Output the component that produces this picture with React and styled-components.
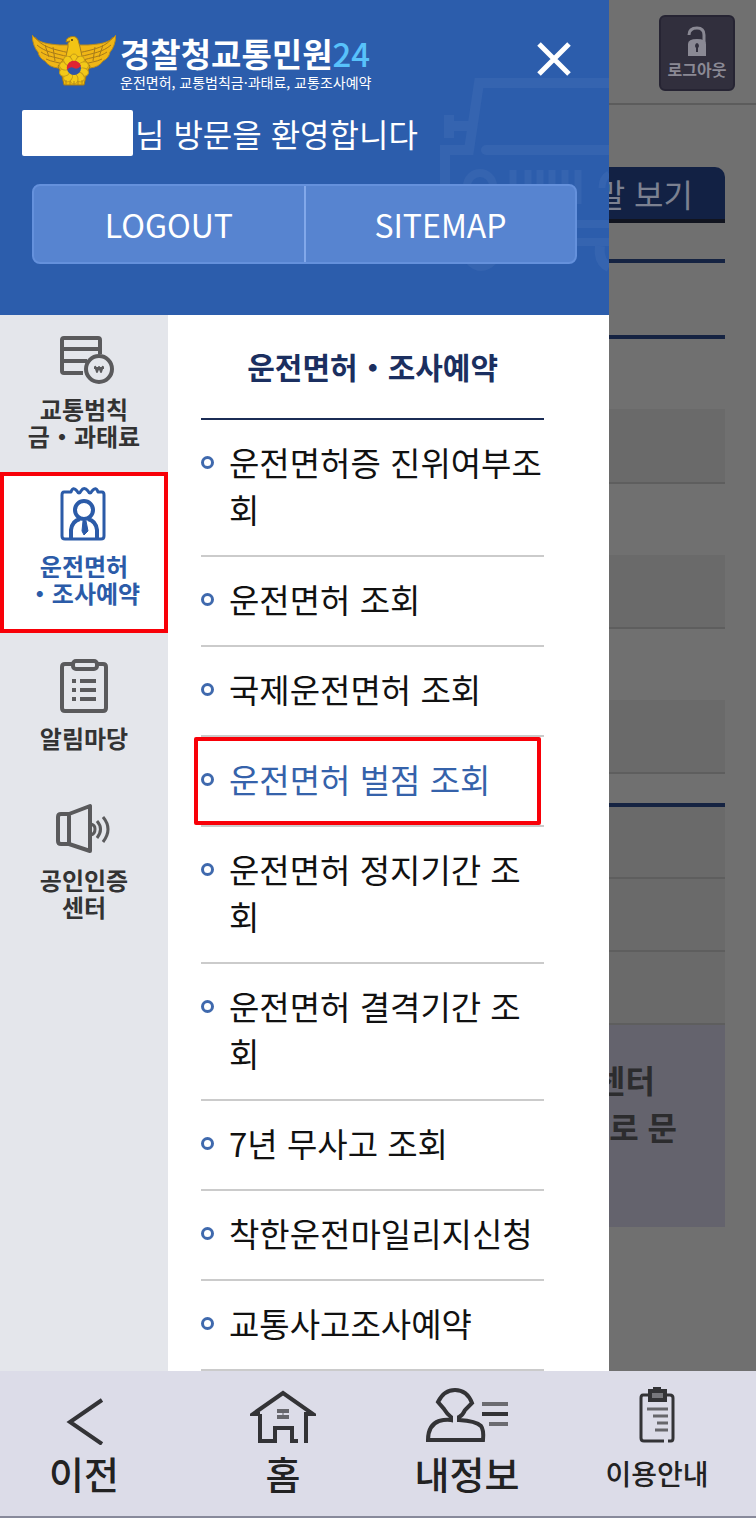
import React from "react";
import styled, { createGlobalStyle, css } from "styled-components";

const Global = createGlobalStyle`
  *, *::before, *::after { box-sizing: border-box; }
  body {
    margin: 0;
    background: #707070;
    font-family: "Noto Sans CJK KR", "Noto Sans", sans-serif;
    color: #111;
  }
  button { font: inherit; color: inherit; border: 0; background: none; padding: 0; cursor: pointer; }
  a { color: inherit; text-decoration: none; }
  ul { list-style: none; margin: 0; padding: 0; }
  h1, h2, p { margin: 0; }
  svg { display: block; }
`;

const Screen = styled.div`
  min-height: 100vh;
  display: flex;
  flex-direction: column;
`;

const Stage = styled.div`
  flex: 1;
  display: grid;
  grid-template-columns: minmax(0, 1fr);
  > * { grid-area: 1 / 1; }
`;

/* Dimmed page behind the drawer */

const Page = styled.div`
  background: #707070;
`;

const PageHeader = styled.header`
  display: flex;
  justify-content: flex-end;
  padding: 15px 21px 12px;
  border-bottom: 2px solid #5c5c5c;
`;

const LockButton = styled.button`
  width: 76px;
  height: 76px;
  display: flex;
  flex-direction: column;
  align-items: center;
  justify-content: center;
  background: #312f3d;
  border: 2px solid #262433;
  border-radius: 6px;
  color: #8a8994;
  font-size: 16px;
  font-weight: 700;
  line-height: 24px;
`;

const PageBody = styled.main`
  padding: 62px 31px 0;
`;

const PageTab = styled.div`
  width: 50%;
  margin-left: auto;
  padding-right: 32px;
  background: #122144;
  border-bottom: 4px solid #11141f;
  border-radius: 0 10px 0 0;
  color: #7c8191;
  font-size: 32px;
  line-height: 52px;
  text-align: right;
`;

const Rule = styled.div`
  height: 4px;
  margin-top: ${(p) => p.$gap}px;
  background: #152342;
`;

const Band = styled.div`
  height: ${(p) => p.$height}px;
  margin-top: ${(p) => p.$gap || 0}px;
  background: #6a6a6a;
  border-bottom: 2px solid #5e5e5e;
`;

const Notice = styled.div`
  padding: 31px 48px 77px;
  background: #64636d;
  color: #2c2c2e;
  font-size: 32px;
  font-weight: 700;
  line-height: 47px;
  text-align: right;
  p:first-child { padding-right: 22px; }
`;

/* Drawer */

const Drawer = styled.aside`
  width: 80.6%;
  z-index: 1;
  display: flex;
  flex-direction: column;
  background: #fff;
`;

const DrawerHeader = styled.header`
  position: relative;
  height: 315px;
  padding: 32px 32px 0;
  overflow: hidden;
  background: #2c5dac;
  color: #fff;
`;

const CarArt = styled.svg`
  position: absolute;
  top: 70px;
  right: 0;
`;

const BrandRow = styled.div`
  position: relative;
  display: flex;
  justify-content: space-between;
  align-items: flex-start;
`;

const Brand = styled.a`
  display: flex;
  gap: 4px;
`;

const BrandName = styled.h1`
  font-size: 33px;
  font-weight: 700;
  line-height: 42px;
  white-space: nowrap;
  span { color: #58c2fb; font-weight: 500; }
`;

const BrandNote = styled.p`
  font-size: 14px;
  line-height: 16px;
  white-space: nowrap;
`;

const CloseButton = styled.button`
  width: 46px;
  height: 54px;
  display: grid;
  place-items: center;
`;

const Welcome = styled.p`
  position: relative;
  display: flex;
  align-items: center;
  gap: 2px;
  margin: 20px 0 28px -10px;
  font-size: 32px;
  line-height: 42px;
  white-space: nowrap;
`;

const HiddenName = styled.span`
  width: 111px;
  height: 46px;
  border-radius: 2px;
  background: #fff;
`;

const Actions = styled.div`
  position: relative;
  display: flex;
  height: 80px;
  border: 2px solid #6591dc;
  border-radius: 8px;
  background: #5784d0;
`;

const ActionButton = styled.button`
  flex: 1;
  font-size: 32px;
  line-height: 76px;
  & + & { border-left: 2px solid #82a8ea; }
`;

const DrawerBody = styled.div`
  flex: 1;
  display: flex;
`;

const Sidebar = styled.nav`
  width: 168px;
  flex: none;
  background: #e4e6eb;
`;

const SideItem = styled.a`
  display: flex;
  flex-direction: column;
  align-items: center;
  gap: 11px;
  padding: ${(p) => (p.$compact ? "15px 0 23px" : "26px 0 24px")};
  color: #333;
  font-size: 24px;
  font-weight: 700;
  line-height: 27px;
  text-align: center;
  white-space: pre;
  ${(p) => p.$active && css`
    padding: 11px 0 23px;
    border: 4px solid #f80008;
    background: #fff;
    color: #2b5ba8;
  `}
`;

const Panel = styled.section`
  flex: 1;
  min-width: 0;
  padding: 0 65px 0 33px;
`;

const PanelTitle = styled.h2`
  padding: 28px 0 29px;
  border-bottom: 2px solid #1b2c55;
  color: #1b2f60;
  font-size: 30px;
  font-weight: 700;
  line-height: 46px;
  text-align: center;
  white-space: nowrap;
`;

const MenuRow = styled.li`
  position: relative;
  border-bottom: 2px solid #cbcbcb;
  ${(p) => p.$active && css`
    color: #3562aa;
    &::after {
      content: "";
      position: absolute;
      inset: 0 3px 0 -7px;
      border: 4px solid #f80008;
      border-radius: 2px;
      pointer-events: none;
    }
  `}
`;

const MenuLink = styled.a`
  display: flex;
  align-items: flex-start;
  gap: 15px;
  padding: 19px 0 22px;
  font-size: 33px;
  line-height: 47px;
  &::before {
    content: "";
    flex: none;
    width: 13px;
    height: 13px;
    margin-top: 17px;
    border: 3px solid #3f69ad;
    border-radius: 50%;
  }
`;

/* Bottom bar */

const BottomBar = styled.nav`
  display: flex;
  justify-content: space-between;
  padding: 16px 44px 23px 29px;
  background: #dcdce8;
  border-bottom: 2px solid #888a9b;
`;

const BarGroup = styled.div`
  display: flex;
  gap: ${(p) => p.$gap}px;
`;

const BarItem = styled.a`
  width: 110px;
  display: flex;
  flex-direction: column;
  align-items: center;
  gap: 8px;
  color: #222;
  font-size: ${(p) => (p.$small ? 28 : 38)}px;
  font-weight: 500;
  line-height: 40px;
  white-space: nowrap;
`;

/* Drawings */

const feathers = [
  "M3 5 C10 15 20 17 38 21",
  "M5 13 C13 20 22 21 37 25",
  "M9 20 C16 25 24 25 36 29",
  "M14 27 C20 30 26 30 34 33",
  "M13 13 L17 25",
  "M21 15 L23 29",
];

const Emblem = () => (
  <svg width="84" height="56" viewBox="0 0 84 56" role="img" aria-label="경찰청">
    {[false, true].map((flip) => (
      <g key={String(flip)} transform={flip ? "translate(84 0) scale(-1 1)" : undefined}>
        <path d="M0 3 C7 12 18 12 28 13 H42 V36 H26 Q17 35 13 29 Q7 26 6 20 Q1 15 0 3Z" fill="#f0b616" stroke="#b78a1c" />
        {feathers.map((d) => <path key={d} d={d} fill="none" stroke="#a67a1a" strokeWidth="1" />)}
      </g>
    ))}
    <path d="M36 15 Q35 11 38 9 L34 10 Q34 6 38 5 Q44 3 46 8 L48 15 L51 29 H33Z" fill="#f3c414" stroke="#a67d1c" />
    <circle cx="40" cy="8" r="1" fill="#463718" />
    <path d="M26 34 L32 27 L42 23 L52 27 L58 34 L54 44 L52 53 H32 L30 44Z" fill="#efbb0b" stroke="#a47b16" />
    {[0, 1, 2, 3, 4, 5, 6, 7, 8, 9].map((n) => (
      <ellipse key={n} cx="42" cy="27" rx="4" ry="5" fill="#f3c918" stroke="#c39a1a" strokeWidth="1" transform={`rotate(${n * 36} 42 37)`} />
    ))}
    <path d="M34 48 V53 M38 49 V53 M42 49 V53 M46 49 V53 M50 48 V53" stroke="#b48a1a" fill="none" />
    <circle cx="42" cy="36" r="7" fill="#2f55a8" />
    <path d="M35 38 A7 7 0 1 1 49 34 Q45 38 42 36 Q38 34 35 38Z" fill="#df2433" />
  </svg>
);

const Car = () => (
  <CarArt width="171" height="206" viewBox="438 70 171 206" fill="none" stroke="#3564b0" strokeWidth="10" aria-hidden="true">
    <path d="M609 83 H479 L469 150 H445 V200" />
    <path d="M486 150 H609" strokeLinecap="round" />
    <path d="M449 115 V138 M454 126 H472" />
    <circle cx="480" cy="186" r="13" strokeWidth="8" />
    <path d="M513 170 V204 M528 170 V204 M540 170 V204 M552 170 V204 M565 170 V204 M578 170 V204" strokeWidth="7" />
    <path d="M609 174 Q602 178 602 188" strokeWidth="7" />
    <path d="M570 224 H609 M570 242 H609" strokeWidth="8" />
    <path d="M470 260 Q481 272 493 260 M600 246 Q598 262 609 267" />
  </CarArt>
);

const Cross = () => (
  <svg width="34" height="34" viewBox="0 0 34 34" stroke="#fff" strokeWidth="5" aria-hidden="true">
    <path d="M2 2 L32 32 M32 2 L2 32" />
  </svg>
);

const OpenLock = () => (
  <svg width="20" height="31" viewBox="0 0 20 31" aria-hidden="true">
    <path d="M2 9 Q2 2 10 2 Q17 2 17 9 V17" fill="none" stroke="#8a8994" strokeWidth="3" />
    <path d="M1 30 V18 Q1 13 10 13 Q19 13 19 18 V30Z" fill="#8a8994" />
    <path d="M10 17 a3 3 0 0 1 1 5 V26 H9 V22 a3 3 0 0 1 1 -5Z" fill="#312f3d" />
  </svg>
);

const SideIcon = ({ children }) => (
  <svg width="60" height="54" viewBox="0 0 60 54" fill="none" stroke="#5a5a5c" strokeWidth="4" strokeLinejoin="round" aria-hidden="true">
    {children}
  </svg>
);

const FineIcon = () => (
  <SideIcon>
    <path d="M29 43 H10 Q8 43 8 41 V10 Q8 8 10 8 H44 Q46 8 46 10 V24 M8 19 H46 M8 31 H33" />
    <circle cx="45" cy="39" r="13" />
    <path d="M41 36 L43 42 L45 37 L47 42 L49 36 M40 38 H50" strokeWidth="2" />
  </SideIcon>
);

const LicenceIcon = () => (
  <svg width="60" height="54" viewBox="0 0 60 54" fill="none" stroke="#2b5ba8" strokeWidth="4" strokeLinejoin="round" aria-hidden="true">
    <path d="M16 5 H10 Q8 5 8 8 V49 Q8 52 11 52 H47 Q50 52 50 49 V8 Q50 5 48 5 H44 Q42 -1 38 4 Q36 8 34 4 Q30 -1 27 4 Q25 8 23 4 Q19 -1 17 5Z" strokeWidth="3" />
    <circle cx="30" cy="23" r="9" />
    <path d="M17 52 V43 Q18 34 26 32 M43 52 V43 Q42 34 34 32" />
    <path d="M29 34 H32 L34 44 L30 48 L28 44Z" fill="#2b5ba8" strokeWidth="1" />
  </svg>
);

const ListIcon = () => (
  <SideIcon>
    <path d="M18 5 H11 Q8 5 8 8 V49 Q8 52 11 52 H49 Q52 52 52 49 V8 Q52 5 49 5 H43" />
    <rect x="19" y="2" width="24" height="8" rx="3" />
    <path d="M18 22 H22 M26 22 H42 M18 31 H22 M26 31 H42 M18 40 H22 M26 40 H42" />
  </SideIcon>
);

const SpeakerIcon = () => (
  <SideIcon>
    <path d="M36 5 V50 L15 43 H7 Q4 43 4 40 V16 Q4 13 7 13 H15 L36 5Z M15 13 V42" />
    <path d="M37 23 Q41 24 41 28 Q41 33 37 34 M43 20 Q50 28 43 37 M49 16 Q59 28 49 41" strokeWidth="3" />
  </SideIcon>
);

const BarIcon = ({ width, children }) => (
  <svg width={width} height="58" viewBox={`0 0 ${width} 58`} fill="none" stroke="#333336" strokeWidth="4" aria-hidden="true">
    {children}
  </svg>
);

const BackIcon = () => (
  <BarIcon width={40}>
    <path d="M38 13 L6 35 L38 57" />
  </BarIcon>
);

const HomeIcon = () => (
  <BarIcon width={66}>
    <path d="M10 27 H3 L33 6 L63 27 H56 V56 M10 27 V54 H25 V41 H42 V54 H48" />
    <path d="M27 24 H39 M27 30 H39" stroke="#66666c" />
    <path d="M33 22 V32" strokeWidth="1" stroke="#66666c" />
  </BarIcon>
);

const ProfileIcon = () => (
  <BarIcon width={84}>
    <path d="M26 33 V30 Q22 27 19 22 L13 15 Q19 3 30 3 Q42 3 47 16 L40 23 Q38 28 34 30 V33 Q51 34 56 39 Q59 43 58 53 H3 Q3 38 14 34 Q21 32 26 33Z" />
    <path d="M57 17 H83 M64 37 H83" stroke="#6b6b70" />
    <path d="M57 27 H83" />
  </BarIcon>
);

const GuideIcon = () => (
  <BarIcon width={36}>
    <path d="M9 8 H4 Q2 8 2 11 V51 Q2 54 5 54 H25 M29 54 H32 Q34 54 34 51 V11 Q34 8 31 8 H27" strokeWidth="3" />
    <rect x="11" y="4" width="15" height="9" fill="#77777c" />
    <path d="M14 2 H22" />
    <path d="M8 22 H29 M14 29 H29 M18 36 H29 M16 43 H29" stroke="#66666b" strokeWidth="3" />
  </BarIcon>
);

const sideItems = [
  { label: "교통범칙\n금・과태료", Icon: FineIcon, compact: true },
  { label: "운전면허\n・조사예약", Icon: LicenceIcon, active: true },
  { label: "알림마당", Icon: ListIcon },
  { label: "공인인증\n센터", Icon: SpeakerIcon },
];

const menu = [
  "운전면허증 진위여부조회",
  "운전면허 조회",
  "국제운전면허 조회",
  "운전면허 벌점 조회",
  "운전면허 정지기간 조회",
  "운전면허 결격기간 조회",
  "7년 무사고 조회",
  "착한운전마일리지신청",
  "교통사고조사예약",
];
const currentMenu = "운전면허 벌점 조회";

export default function App() {
  return (
    <Screen lang="ko">
      <Global />
      <Stage>
        <Page>
          <PageHeader>
            <LockButton type="button">
              <OpenLock />
              로그아웃
            </LockButton>
          </PageHeader>
          <PageBody>
            <PageTab>말 보기</PageTab>
            <Rule $gap={36} />
            <Rule $gap={72} />
            <Band $gap={70} $height={75} />
            <Band $gap={71} $height={74} />
            <Band $gap={71} $height={74} />
            <Rule $gap={29} />
            <Band $height={72} />
            <Band $height={73} />
            <Band $height={73} />
            <Notice>
              <p>센터</p>
              <p>로 문</p>
            </Notice>
          </PageBody>
        </Page>

        <Drawer>
          <DrawerHeader>
            <Car />
            <BrandRow>
              <Brand href="#home">
                <Emblem />
                <div>
                  <BrandName>경찰청교통민원<span>24</span></BrandName>
                  <BrandNote>운전면허, 교통범칙금·과태료, 교통조사예약</BrandNote>
                </div>
              </Brand>
              <CloseButton type="button" aria-label="닫기"><Cross /></CloseButton>
            </BrandRow>
            <Welcome>
              <HiddenName />
              <span>님 방문을 환영합니다</span>
            </Welcome>
            <Actions>
              <ActionButton type="button">LOGOUT</ActionButton>
              <ActionButton type="button">SITEMAP</ActionButton>
            </Actions>
          </DrawerHeader>
          <DrawerBody>
            <Sidebar>
              {sideItems.map(({ label, Icon, compact, active }) => (
                <SideItem key={label} href="#section" $compact={compact} $active={active}>
                  <Icon />
                  <span>{label}</span>
                </SideItem>
              ))}
            </Sidebar>
            <Panel>
              <PanelTitle>운전면허・조사예약</PanelTitle>
              <ul>
                {menu.map((name) => (
                  <MenuRow key={name} $active={name === currentMenu}>
                    <MenuLink href="#menu"><span>{name}</span></MenuLink>
                  </MenuRow>
                ))}
              </ul>
            </Panel>
          </DrawerBody>
        </Drawer>
      </Stage>

      <BottomBar>
        <BarGroup $gap={89}>
          <BarItem href="#back"><BackIcon />이전</BarItem>
          <BarItem href="#home"><HomeIcon />홈</BarItem>
        </BarGroup>
        <BarGroup $gap={80}>
          <BarItem href="#me"><ProfileIcon />내정보</BarItem>
          <BarItem href="#guide" $small><GuideIcon />이용안내</BarItem>
        </BarGroup>
      </BottomBar>
    </Screen>
  );
}
